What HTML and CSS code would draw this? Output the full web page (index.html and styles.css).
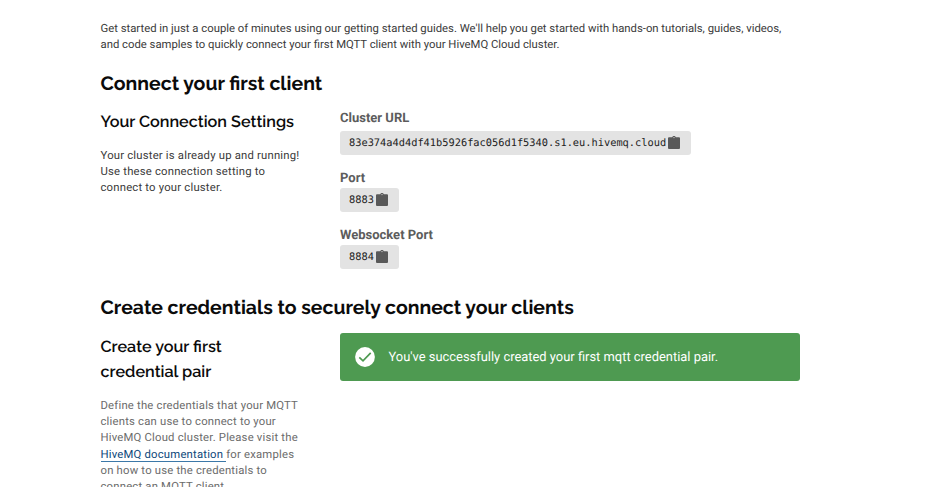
FILE: index.html
```html
<!DOCTYPE html>
<html lang="en">
<head>
<meta charset="utf-8">
<title>Getting Started</title>
<link rel="stylesheet" href="styles.css">
</head>
<body>
<svg width="0" height="0" class="defs" aria-hidden="true">
  <symbol id="clipboard" viewBox="0 0 12 13"><path d="M1 1.2h3.2a1.9 1.9 0 0 1 3.6 0H11a1 1 0 0 1 1 1V12a1 1 0 0 1-1 1H1a1 1 0 0 1-1-1V2.200a1 1 0 0 1 1-1zM6 1a.6.6 0 1 0 0 1.200A.6.6 0 0 0 6 1z" fill="#595959" fill-rule="evenodd"/></symbol>
</svg>
<main class="page">
  <p class="intro">Get started in just a couple of minutes using our getting started guides. We'll help you get started with hands-on tutorials, guides, videos,<br>and code samples to quickly connect your first MQTT client with your HiveMQ Cloud cluster.</p>

  <section class="connect">
    <h2>Connect your first client</h2>
    <div class="row">
      <div class="side">
        <h3>Your Connection Settings</h3>
        <p class="copy">Your cluster is already up and running!<br>Use these connection setting to<br>connect to your cluster.</p>
      </div>
      <dl class="settings">
        <dt>Cluster URL</dt>
        <dd class="url"><code>83e374a4d4df41b5926fac056d1f5340.s1.eu.hivemq.cloud</code><svg class="clip"><use href="#clipboard"/></svg></dd>
        <dt>Port</dt>
        <dd><code>8883</code><svg class="clip"><use href="#clipboard"/></svg></dd>
        <dt>Websocket Port</dt>
        <dd><code>8884</code><svg class="clip"><use href="#clipboard"/></svg></dd>
      </dl>
    </div>
  </section>

  <section class="credentials">
    <h2>Create credentials to securely connect your clients</h2>
    <div class="row">
      <div class="side">
        <h3>Create your first<br>credential pair</h3>
        <p class="copy muted">Define the credentials that your MQTT<br>clients can use to connect to your<br>HiveMQ Cloud cluster. Please visit the<br><a href="#">HiveMQ documentation </a>for examples<br>on how to use the credentials to<br>connect an MQTT client.</p>
      </div>
      <div class="alert">
        <svg class="check" viewBox="0 0 20 20"><circle cx="10" cy="10" r="9.900" fill="#fff"/><path d="M4.300 10.300l3.700 3.500 7.700-8" fill="none" stroke="#4e9a51" stroke-width="1.700"/></svg>
        <span>You've successfully created your first mqtt credential pair.</span>
      </div>
    </div>
  </section>
</main>
</body>
</html>
```
FILE: styles.css
```css
* { box-sizing: border-box; margin: 0; padding: 0; }
html, body { height: 487px; overflow: hidden; background: #fff; }
body { font-family: Roboto, sans-serif; font-size: 11.3px; line-height: 16.1px; color: #3a3a3a; text-rendering: geometricPrecision; }
.defs { display: block; height: 0; }
.page { width: 800.5px; padding: 20px 0 0 100.5px; }
.intro { padding-top: 0.5px; white-space: nowrap; }
h2, h3 { font-family: Raleway, Lato, sans-serif; color: #0b0b0b; white-space: nowrap; }
h2 { font-size: 19.45px; line-height: 26px; font-weight: 700; }
h3 { font-size: 16.2px; line-height: 25.5px; font-weight: 600; }
.connect { margin-top: 18.3px; }
.credentials { margin-top: 11.3px; }
.row { display: grid; grid-template-columns: 239.5px 460px; align-items: start; }
.connect .row { margin-top: 12px; }
.credentials .row { margin-top: 11.8px; }
.credentials .side { padding-top: 0.7px; }
.copy { margin-top: 13.5px; letter-spacing: 0.2px; white-space: nowrap; }
.muted { color: #6b6b6b; }
.muted a { color: #0d477a; text-decoration: none; border-bottom: 1px solid #3c78a8; }
.settings { padding-top: 1px; }
.settings dt { font-size: 13px; line-height: 18px; font-weight: 700; color: #5c5c5c; }
.settings dd { display: flex; align-items: center; width: 59px; height: 24px; padding-left: 9px; margin-bottom: 14.6px; border-radius: 3px; background: #e3e3e3; }
.settings .url { width: 351px; margin: 3px 0 15px; }
.settings dd:last-child { margin-bottom: 15.4px; }
code { font-family: "DejaVu Sans Mono", monospace; font-size: 10.34px; color: #222; padding-top: 1px; }
.clip { width: 12px; height: 13px; margin: -1px 0 0 2.5px; }
.url .clip { margin-left: 2px; }
.alert { display: flex; align-items: center; height: 48px; padding-left: 14.5px; border-radius: 3px; background: #4e9a51; color: #fff; font-size: 12.92px; white-space: nowrap; }
.alert span { padding-top: 1px; }
.check { width: 20px; height: 20px; margin-right: 14px; }
```
